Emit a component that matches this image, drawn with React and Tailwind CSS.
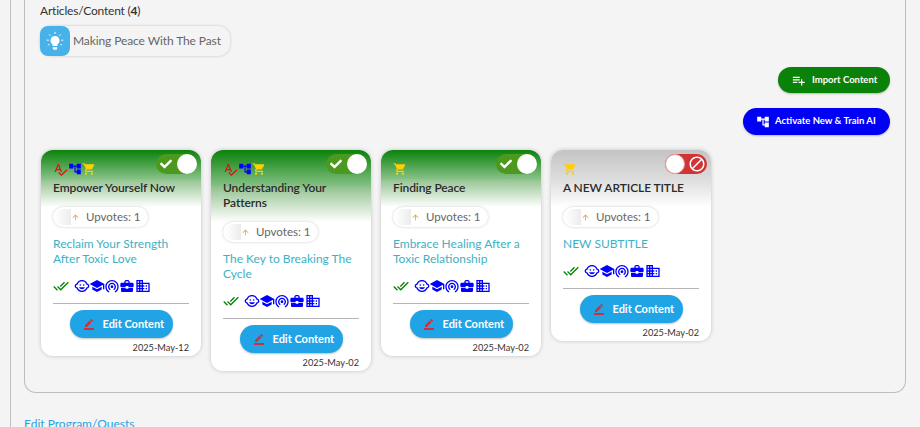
import { MdSpellcheck, MdAccountTree, MdShoppingCart, MdDoneAll, MdChildCare, MdSchool, MdWifiTethering, MdBusinessCenter, MdOutlineBusiness, MdPlaylistAdd, MdBorderColor, MdBlock, MdArrowUpward } from 'react-icons/md';
import { FaCheck } from 'react-icons/fa';

const articles = [
  { id: 1, title: 'Empower Yourself Now', subtitle: 'Reclaim Your Strength After Toxic Love', date: '2025-May-12', tools: true, on: true },
  { id: 2, title: 'Understanding Your Patterns', subtitle: 'The Key to Breaking The Cycle', date: '2025-May-02', tools: true, on: true },
  { id: 3, title: 'Finding Peace', subtitle: 'Embrace Healing After a Toxic Relationship', date: '2025-May-02', tools: false, on: true },
  { id: 4, title: 'A NEW ARTICLE TITLE', subtitle: 'NEW SUBTITLE', date: '2025-May-02', tools: false, on: false },
];

const BulbIcon = () => (
  <svg viewBox="0 0 24 24" className="w-[20px] h-[20px] text-white" fill="none" stroke="currentColor">
    <path d="M12 6a5.5 5.5 0 0 0-3 10v2h6v-2a5.5 5.5 0 0 0-3-10z" fill="currentColor" stroke="none" />
    <path d="M9.5 19.5h5v1.5a1.5 1.5 0 0 1-1.5 1.5h-2a1.5 1.5 0 0 1-1.5-1.5z" fill="currentColor" stroke="none" />
    <path d="M12 1v2.5M5 4l1.6 1.8M19 4l-1.6 1.8M2 11h2.5M19.5 11H22M3.5 17l2-1.2M20.5 17l-2-1.2" strokeWidth="1.2" />
  </svg>
);

const ArticleCard = ({ article }) => {
  return (
    <div className="relative w-[160px] rounded-xl bg-white shadow-[0_0_4px_rgba(0,0,0,0.2)] overflow-hidden">
      <div className={`pl-3 pr-2 pt-[12px] pb-[12px] bg-gradient-to-b ${article.on ? 'from-[#0a820a] via-[#0a820a]/50 to-white' : 'from-[#c4c4c4] via-[#dcdcdc] to-white'}`}>
        <div className="flex items-center h-[14px]">
          {article.tools && <MdSpellcheck className="w-[15px] h-[15px] text-[#e01010]" />}
          {article.tools && <MdAccountTree className="w-[14px] h-[14px] text-[#0000ff]" />}
          <MdShoppingCart className="w-[14px] h-[14px] text-[#ffd000]" />
        </div>
        <div className="mt-[4px] text-[12px] leading-[15px] tracking-[-0.1px] font-semibold text-[#2b2b2b]">{article.title}</div>
      </div>

      {article.on ? (
        <div className="absolute top-[4px] right-[4px] w-[41px] h-[20px] rounded-full bg-[#4b9a1f] flex items-center">
          <FaCheck className="ml-[4px] w-[12px] h-[12px] text-white" />
          <div className="absolute right-0 w-[20px] h-[20px] rounded-full bg-white" />
        </div>
      ) : (
        <div className="absolute top-[4px] right-[4px] w-[42px] h-[20px] rounded-full bg-[#d03434] flex items-center justify-end">
          <MdBlock className="mr-[1px] w-[18px] h-[18px] text-white" />
          <div className="absolute left-0 w-[20px] h-[20px] rounded-full bg-white border border-[#e8a0a0]" />
        </div>
      )}

      <div className="px-3">
        <div className="flex items-center w-[95px] h-[20px] rounded-full bg-white shadow-[0_0_3px_rgba(0,0,0,0.2)]">
          <div className="ml-[2px] w-[16px] h-[16px] rounded-l-full bg-gradient-to-r from-white to-[#ececec]" />
          <MdArrowUpward className="w-[9px] h-[9px] text-[#e0a030]" />
          <span className="ml-[6px] text-[11.5px] whitespace-nowrap text-[#666]">Upvotes: 1</span>
        </div>
        <div className="mt-[9px] text-[12px] leading-[15px] text-[#3eb1c4]">{article.subtitle}</div>
        <div className="mt-[13px] flex items-center h-[14px]">
          <MdDoneAll className="w-[16px] h-[16px] text-[#0a820a]" />
          <div className="ml-[5px] flex items-center text-[#0000ff]">
            <MdChildCare className="w-[16px] h-[16px]" />
            <MdSchool className="w-[16px] h-[16px] -ml-[1px]" />
            <MdWifiTethering className="w-[16px] h-[16px] -ml-[1px]" />
            <MdBusinessCenter className="w-[16px] h-[16px] -ml-[1px]" />
            <MdOutlineBusiness className="w-[16px] h-[16px]" />
          </div>
        </div>
        <hr className="mt-[10px] border-t border-[#b5b5b5]" />
        <div className="mt-[6px] flex justify-center">
          <button className="flex items-center w-[103px] h-[28px] rounded-full bg-[#21a4e6] text-white text-[11px] font-bold shadow-[0_1px_2px_rgba(0,0,0,0.25)]">
            <MdBorderColor className="ml-[13px] w-[12px] h-[12px] text-[#d0303a]" />
            <span className="ml-[8px]">Edit Content</span>
          </button>
        </div>
        <div className="mt-[3px] pb-[2px] text-right text-[9.2px] leading-[13px] text-[#333]">{article.date}</div>
      </div>
    </div>
  );
};

const App = () => {
  return (
    <div className="w-[920px] h-[427px] overflow-hidden bg-[#f4f4f4] font-['Lato','Liberation_Sans',sans-serif]">
      <div className="ml-[10px] h-full border-l border-[#c0c0c0] pl-[13px] pr-[14px]">
        <div className="h-[393px] border border-t-0 border-[#bdbdbd] rounded-b-xl pl-[15px] pr-[15px] pt-[3px]">
          <div className="text-[12px] leading-[16px] tracking-[-0.2px] text-[#333]">Articles/Content (<b>4</b>)</div>
          <div className="mt-[7px] flex items-center w-[190px] h-[30px] rounded-xl bg-[#f4f4f4] shadow-[0_0_3px_rgba(0,0,0,0.2)]">
            <div className="w-[30px] h-[30px] rounded-lg bg-[#47b2ea] flex items-center justify-center">
              <BulbIcon />
            </div>
            <span className="ml-[3px] text-[12px] tracking-[-0.1px] whitespace-nowrap text-[#666]">Making Peace With The Past</span>
          </div>

          <div className="mt-[11px] flex flex-col items-end gap-[15px]">
            <button className="flex items-center w-[112px] h-[26px] rounded-full bg-[#0a820a] text-white text-[9.5px] font-bold shadow-[0_1px_2px_rgba(0,0,0,0.25)]">
              <MdPlaylistAdd className="ml-[13px] w-[15px] h-[15px]" />
              <span className="ml-[6px]">Import Content</span>
            </button>
            <button className="flex items-center w-[147px] h-[27px] rounded-full bg-[#0000f5] text-white text-[9.5px] font-bold shadow-[0_1px_2px_rgba(0,0,0,0.25)]">
              <MdAccountTree className="ml-[13px] w-[14px] h-[14px]" />
              <span className="ml-[5px]">Activate New &amp; Train AI</span>
            </button>
          </div>

          <div className="mt-[15px] ml-[1px] flex items-start gap-[10px]">
            {articles.map((article) => (
              <ArticleCard key={article.id} article={article} />
            ))}
          </div>
        </div>
        <div className="mt-[24px] text-[12px] leading-[14px] text-[#2aa3e0]">Edit Program/Quests</div>
      </div>
    </div>
  );
};

export default App;
